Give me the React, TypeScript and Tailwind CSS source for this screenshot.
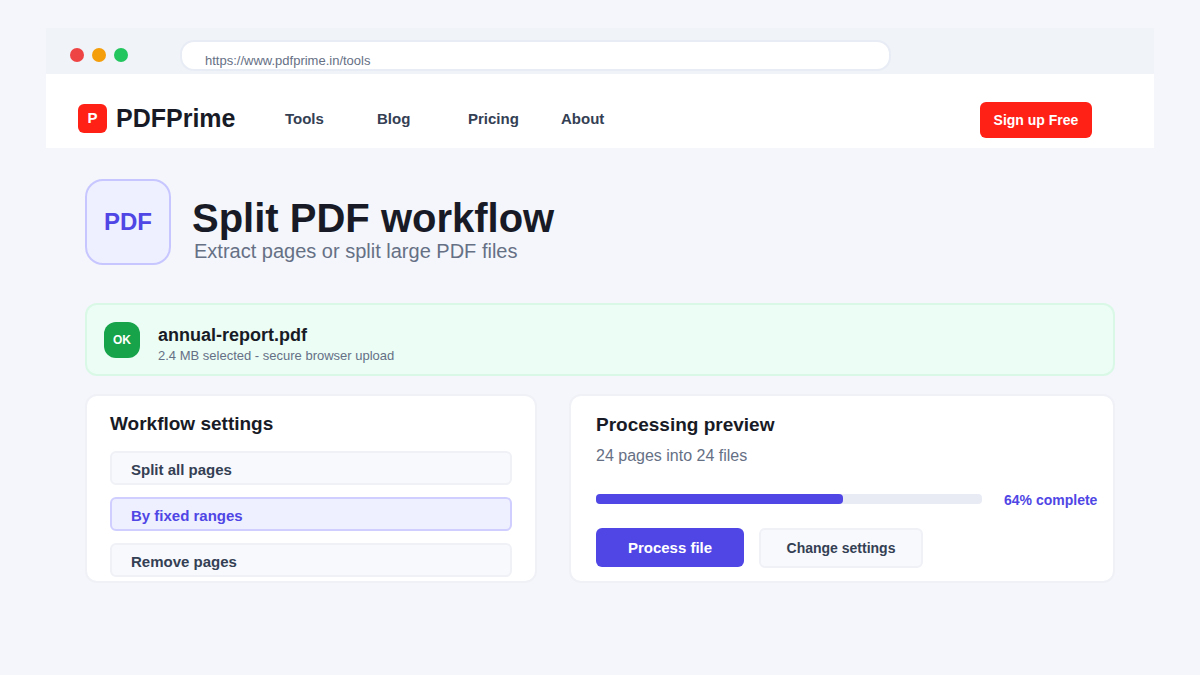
import React from 'react';

const navLinks = [
  { label: 'Tools', className: 'w-[92px]' },
  { label: 'Blog', className: 'w-[91px]' },
  { label: 'Pricing', className: 'w-[93px]' },
  { label: 'About', className: 'w-[60px]' },
];

const options = [
  { label: 'Split all pages', active: false },
  { label: 'By fixed ranges', active: true },
  { label: 'Remove pages', active: false },
];

const App: React.FC = () => {
  return (
    <div className="h-[675px] w-[1200px] overflow-hidden bg-[#f4f6fb] pt-[28px] font-['Liberation_Sans',Arial,sans-serif]">
      {/* Browser chrome */}
      <div className="mx-[46px] flex h-[46px] bg-[#f0f3f8] pl-[24px] pt-[12px]">
        <div className="flex h-[30px] w-[110px] gap-[8px] pt-[8px]">
          <span className="h-[14px] w-[14px] rounded-full bg-[#ef4444]" />
          <span className="h-[14px] w-[14px] rounded-full bg-[#f59e0b]" />
          <span className="h-[14px] w-[14px] rounded-full bg-[#22c55e]" />
        </div>
        <div className="h-[31px] w-[711px] rounded-[14px] border-2 border-[#e8ecf5] bg-white pl-[23px] pt-[9px] text-[13px] leading-[20px] text-[#667085]">
          https://www.pdfprime.in/tools
        </div>
      </div>

      {/* Nav */}
      <div className="mx-[46px] flex h-[74px] items-center bg-white pl-[32px] pt-[15px]">
        <div className="flex w-[207px] items-center gap-[9px]">
          <div className="flex h-[29px] w-[29px] items-center justify-center rounded-[6px] bg-[#ff2116] text-[15px] font-bold text-white">
            P
          </div>
          <span className="mt-[-2px] text-[25px] font-bold leading-[30px] text-[#181b26]">PDFPrime</span>
        </div>
        {navLinks.map((link) => (
          <span key={link.label} className={`${link.className} mt-[2px] text-[15px] font-bold text-[#344054]`}>
            {link.label}
          </span>
        ))}
        <button className="ml-[359px] mt-[3px] h-[36px] w-[112px] rounded-[6px] bg-[#ff2116] pt-[1px] text-[14px] font-bold text-white">
          Sign up Free
        </button>
      </div>

      <div className="ml-[85px] w-[1030px]">
        {/* Title */}
        <div className="mt-[31px] flex">
          <div className="flex h-[86px] w-[86px] items-center justify-center rounded-[18px] border-2 border-[#c7c6ff] bg-[#eff0ff] text-[24px] font-bold text-[#4f46e5]">
            PDF
          </div>
          <div className="ml-[21px] pt-[14px]">
            <h1 className="text-[40px] font-bold leading-[50px] text-[#181b26]">Split PDF workflow</h1>
            <p className="ml-[2px] mt-[-4px] text-[20px] leading-[24px] text-[#667085]">
              Extract pages or split large PDF files
            </p>
          </div>
        </div>

        {/* File banner */}
        <div className="mt-[38px] flex h-[73px] items-center rounded-[12px] border-2 border-[#daf8e6] bg-[#ebfdf5] pl-[17px]">
          <div className="flex h-[36px] w-[36px] items-center justify-center rounded-[12px] bg-[#16a34a] text-[12px] font-bold text-white">
            OK
          </div>
          <div className="ml-[18px] pt-[8px]">
            <div className="text-[18px] font-bold leading-[22px] text-[#181b26]">annual-report.pdf</div>
            <div className="mt-[2px] text-[13px] leading-[16px] text-[#667085]">
              2.4 MB selected - secure browser upload
            </div>
          </div>
        </div>

        <div className="mt-[18px] flex gap-[32px]">
          {/* Settings */}
          <div className="h-[189px] w-[452px] rounded-[12px] border-2 border-[#eff1f7] bg-white px-[23px] pt-[16px]">
            <h2 className="text-[19px] font-bold leading-[24px] text-[#181b26]">Workflow settings</h2>
            <div className="mt-[15px] flex flex-col gap-[12px]">
              {options.map((option) => (
                <div
                  key={option.label}
                  className={
                    option.active
                      ? 'h-[34px] rounded-[6px] border-2 border-[#cfceff] bg-[#eeefff] pl-[19px] pt-[7px] text-[15px] font-bold leading-[20px] text-[#4f46e5]'
                      : 'h-[34px] rounded-[6px] border-2 border-[#eff1f7] bg-[#f8f9fc] pl-[19px] pt-[7px] text-[15px] font-bold leading-[20px] text-[#344054]'
                  }
                >
                  {option.label}
                </div>
              ))}
            </div>
          </div>

          {/* Preview */}
          <div className="h-[189px] w-[546px] rounded-[12px] border-2 border-[#eff1f7] bg-white pl-[25px] pt-[17px]">
            <h2 className="text-[19px] font-bold leading-[24px] text-[#181b26]">Processing preview</h2>
            <p className="mt-[9px] text-[16px] leading-[20px] text-[#667085]">24 pages into 24 files</p>
            <div className="mt-[24px] flex h-[18px] items-center">
              <div className="h-[10px] w-[386px] rounded-[4px] bg-[#e8ebf4]">
                <div className="h-[10px] w-[247px] rounded-[4px] bg-[#4f46e5]" />
              </div>
              <span className="ml-[22px] mt-[2px] text-[14px] font-bold leading-[18px] text-[#4f46e5]">64% complete</span>
            </div>
            <div className="mt-[20px] flex items-start gap-[15px]">
              <button className="h-[39px] w-[148px] rounded-[6px] bg-[#4f46e5] pt-[1px] text-[15px] font-bold text-white">
                Process file
              </button>
              <button className="h-[40px] w-[164px] rounded-[6px] border-2 border-[#eff1f7] bg-[#f8f9fc] text-[14px] font-bold text-[#344054]">
                Change settings
              </button>
            </div>
          </div>
        </div>
      </div>
    </div>
  );
};

export default App;
